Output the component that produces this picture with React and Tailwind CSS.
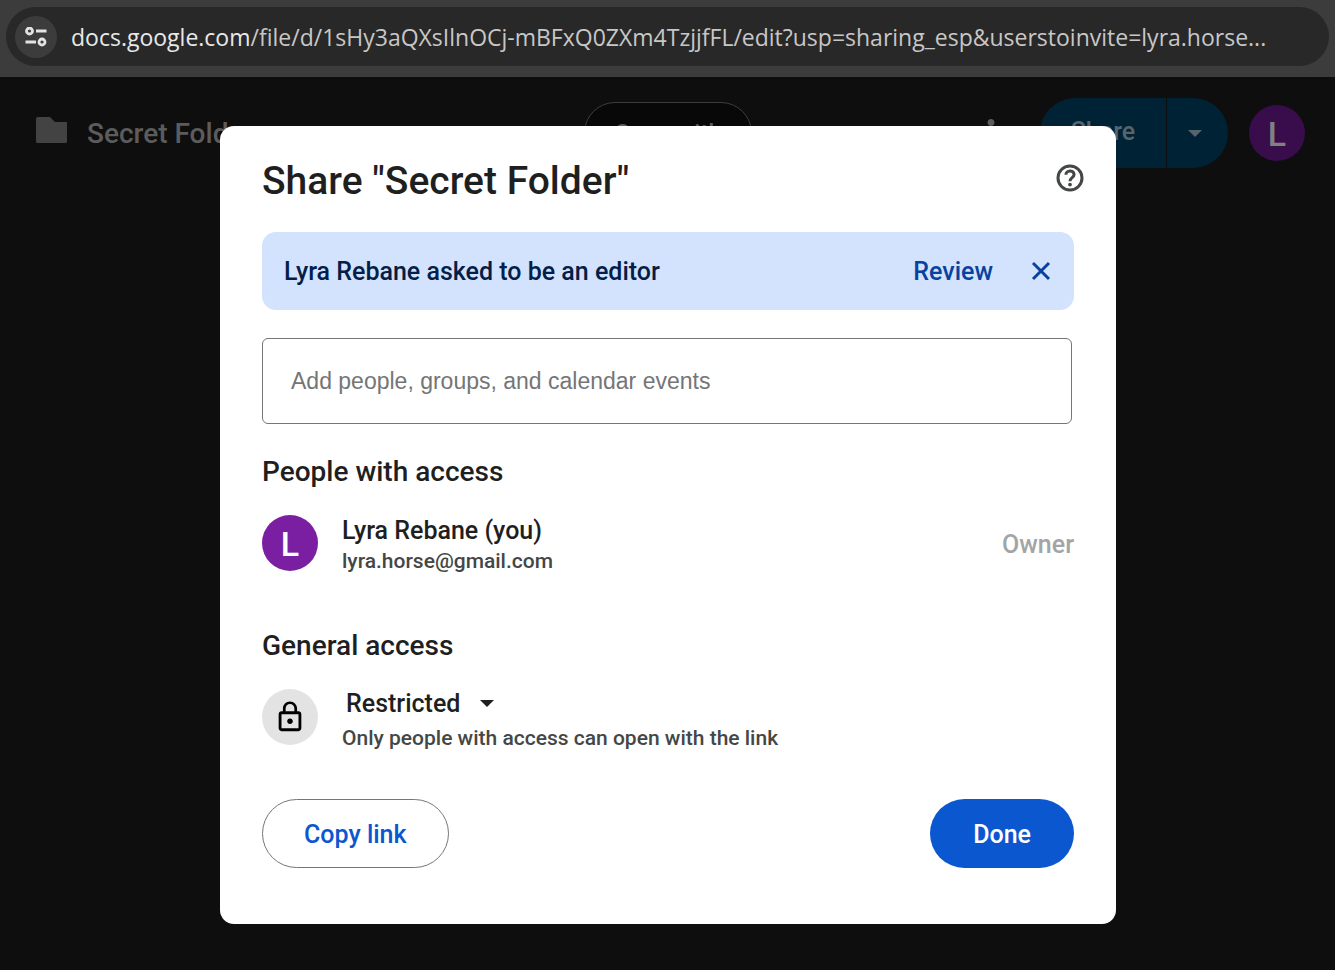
import React, { useState } from 'react';
import { MdLockOutline, MdMoreVert } from 'react-icons/md';

const CaretIcon = ({ className }) => (
  <svg viewBox="0 0 14 7" className={className} fill="currentColor" aria-hidden="true">
    <path d="M0 0h14L7 7z" />
  </svg>
);

const CloseIcon = () => (
  <svg viewBox="0 0 28 28" className="w-7 h-7" fill="none" stroke="currentColor" strokeWidth="3" aria-hidden="true">
    <path d="M6 6l16 16M22 6L6 22" />
  </svg>
);

const SiteSettingsIcon = () => (
  <svg viewBox="0 0 22 20" className="w-[22px] h-5" fill="none" stroke="currentColor" aria-hidden="true">
    <circle cx="4.500" cy="4" r="3" strokeWidth="2.8" />
    <path d="M11 4h10.500M.5 15h10.500" strokeWidth="2.8" />
    <circle cx="17" cy="15" r="3" strokeWidth="2.8" />
  </svg>
);

const FolderIcon = () => (
  <svg viewBox="0 0 31 26" className="w-[31px] h-[26px] shrink-0" fill="currentColor" aria-hidden="true">
    <path d="M2 0h12l5 5h12v19.500a1.500 1.500 0 0 1-1.500 1.500h-28A1.500 1.500 0 0 1 0 24.500V2a2 2 0 0 1 2-2z" />
  </svg>
);

const HelpIcon = () => (
  <svg viewBox="0 0 28 28" className="w-7 h-7" fill="none" stroke="currentColor" aria-hidden="true">
    <circle cx="14" cy="14" r="12" strokeWidth="3" />
    <path d="M9.900 10.800c0-2.300 1.700-3.900 4.100-3.900s4.100 1.500 4.100 3.700c0 3-4.100 3.200-4.100 6.600" strokeWidth="3" />
    <circle cx="14" cy="20.600" r="1.900" fill="currentColor" stroke="none" />
  </svg>
);

const AddressBar = () => (
  <div className="h-[77px] bg-[#3c3c3c] px-1.5 pt-[7px]">
    <div className="flex items-center h-[59px] rounded-full bg-[#282828] pl-[9px] pr-8">
      <button
        type="button"
        aria-label="View site information"
        className="flex items-center justify-center w-[42px] h-[42px] shrink-0 rounded-full bg-[#3c3c3c] text-[#e3e3e3]"
      >
        <SiteSettingsIcon />
      </button>
      <p className="ml-3.5 whitespace-nowrap font-['Open_Sans','Noto_Sans',sans-serif] text-[23px] leading-9 text-[#c7c7c7]">
        <span className="text-[#e8e8e8]">docs.google.com</span>
        /file/d/1sHy3aQXsIlnOCj-mBFxQ0ZXm4TzjjfFL/edit?usp=sharing_esp&amp;userstoinvite=lyra.horse...
      </p>
    </div>
  </div>
);

const PageHeader = () => (
  <header className="flex items-center h-28 pl-9 pr-[30px] font-medium text-[#5c5c5c]">
    <span className="text-[#434343] mb-1.5">
      <FolderIcon />
    </span>
    <span className="ml-5 pt-0.5 text-[28px] leading-8">Secret Folder</span>
    <button
      type="button"
      className="ml-auto h-[62px] w-[168px] rounded-full border border-[#3c3c3c] bg-[#080808] text-2xl"
    >
      Open with
    </button>
    <button type="button" aria-label="More actions" className="ml-[218px]">
      <MdMoreVert className="w-[42px] h-[42px]" />
    </button>
    <div className="ml-7 flex h-[70px] text-[#56646d]">
      <button type="button" className="w-[126px] rounded-l-full bg-[#002235] text-[25px] pb-0.5">
        Share
      </button>
      <button
        type="button"
        aria-label="Quick sharing actions"
        className="ml-px w-[61px] flex items-center justify-center rounded-r-full bg-[#002235]"
      >
        <CaretIcon className="w-3.5 h-[7px] mr-1.5" />
      </button>
    </div>
    <div className="ml-[21px] flex items-center justify-center w-14 h-14 rounded-full bg-[#390d4b] text-[34px] text-[#818181] pt-0.5">
      L
    </div>
  </header>
);

const ShareDialog = () => {
  const [access, setAccess] = useState('restricted');

  return (
    <div
      role="dialog"
      aria-labelledby="share-title"
      className="w-full max-w-4xl rounded-[14px] bg-white px-[42px] pt-[30px] pb-14 font-medium text-[#1f1f1f]"
    >
      {/* Title */}
      <div className="flex items-center justify-between h-12">
        <h1 id="share-title" className="pt-0.5 text-[39px] leading-[48px]">Share "Secret Folder"</h1>
        <button type="button" aria-label="Help" className="-mr-2.5 mb-1 text-[#444746]">
          <HelpIcon />
        </button>
      </div>

      {/* Access request */}
      <div className="mt-7 flex items-center h-[78px] rounded-[14px] bg-[#d3e3fd] pl-[22px] pr-[19px] text-[25px] text-[#041e49]">
        <span className="pt-0.5">Lyra Rebane asked to be an editor</span>
        <button type="button" className="ml-auto pt-0.5 text-[#0842a0]">Review</button>
        <button type="button" aria-label="Dismiss" className="ml-[34px] text-[#0842a0]">
          <CloseIcon />
        </button>
      </div>

      <input
        type="text"
        aria-label="Add people, groups, and calendar events"
        placeholder="Add people, groups, and calendar events"
        className="mt-7 block w-[calc(100%-2px)] h-[86px] rounded-md border border-[#747775] px-7 font-['Liberation_Sans',Arial,sans-serif] text-[23px] font-normal placeholder:text-[#757575]"
      />

      {/* People */}
      <h2 className="mt-[30px] text-[28px] leading-9">People with access</h2>
      <div className="mt-[25px] flex items-center h-14">
        <div className="flex items-center justify-center w-14 h-14 rounded-full bg-[#7b1fa2] text-[34px] text-white pt-0.5">
          L
        </div>
        <div className="ml-6 pt-1">
          <p className="text-[25px] leading-8">Lyra Rebane (you)</p>
          <p className="text-[21px] leading-7 text-[#444746]">lyra.horse@gmail.com</p>
        </div>
        <span className="ml-auto pt-1 text-[25px] text-[#a3a5a4]">Owner</span>
      </div>

      {/* General access */}
      <h2 className="mt-[57px] text-[28px] leading-9">General access</h2>
      <div className="mt-[25px] flex items-center h-14">
        <div className="flex items-center justify-center w-14 h-14 rounded-full bg-[#e3e3e3] text-black">
          <MdLockOutline className="w-[34px] h-[34px]" />
        </div>
        <div className="ml-6 pt-1.5">
          <div className="relative w-40">
            <select
              aria-label="General access"
              value={access}
              onChange={(e) => setAccess(e.target.value)}
              className="block w-full appearance-none bg-transparent pl-1 text-[25px] leading-9"
            >
              <option value="restricted">Restricted</option>
              <option value="link">Anyone with the link</option>
            </select>
            <CaretIcon className="absolute right-2 top-3.5 w-3.5 h-[7px] pointer-events-none" />
          </div>
          <p className="text-[21px] leading-8 text-[#444746]">Only people with access can open with the link</p>
        </div>
      </div>

      <div className="mt-[54px] flex justify-between text-[25px]">
        <button type="button" className="h-[69px] px-[41px] pt-0.5 rounded-full border border-[#747775] text-[#0b57d0]">
          Copy link
        </button>
        <button type="button" className="h-[69px] px-[43px] pt-0.5 rounded-full bg-[#0b57d0] text-white">
          Done
        </button>
      </div>
    </div>
  );
};

export default function App() {
  return (
    <div className="relative min-h-screen bg-[#0e0e0e] font-[Roboto,sans-serif]">
      <AddressBar />
      <PageHeader />
      <div className="absolute inset-x-0 top-[126px] flex justify-center pl-px">
        <ShareDialog />
      </div>
    </div>
  );
}
